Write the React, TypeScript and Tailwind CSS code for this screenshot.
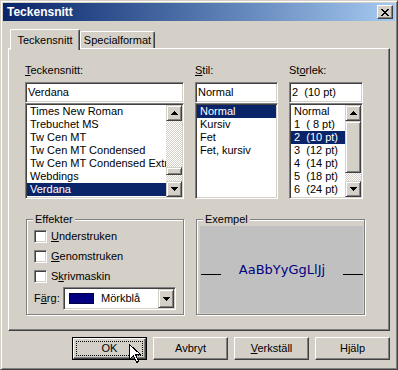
import React from "react";

const raised =
  "border border-t-white border-l-white border-r-[#404040] border-b-[#404040] shadow-[inset_-1px_-1px_0_#808080]";
const sunken =
  "border border-t-[#808080] border-l-[#808080] border-r-white border-b-white shadow-[inset_1px_1px_0_#404040,inset_-1px_-1px_0_#d4d0c8]";
const sbButton =
  "border border-t-[#d4d0c8] border-l-[#d4d0c8] border-r-[#404040] border-b-[#404040] shadow-[inset_1px_1px_0_#fff,inset_-1px_-1px_0_#808080] bg-[#d4d0c8]";
const checker =
  "bg-[repeating-conic-gradient(#ffffff_0_25%,#d4d0c8_0_50%)] bg-[length:2px_2px]";

const fonts = [
  "Times New Roman",
  "Trebuchet MS",
  "Tw Cen MT",
  "Tw Cen MT Condensed",
  "Tw Cen MT Condensed Extra Bold",
  "Webdings",
  "Verdana",
];
const styles = ["Normal", "Kursiv", "Fet", "Fet, kursiv"];
const sizes = ["Normal", "1  ( 8 pt)", "2  (10 pt)", "3  (12 pt)", "4  (14 pt)", "5  (18 pt)", "6  (24 pt)"];

const Arrow = ({ down }: { down?: boolean }) => (
  <svg width="7" height="4" viewBox="0 0 7 4" shapeRendering="crispEdges" className={down ? "rotate-180" : ""}>
    <rect x="3" y="0" width="1" height="1" />
    <rect x="2" y="1" width="3" height="1" />
    <rect x="1" y="2" width="5" height="1" />
    <rect x="0" y="3" width="7" height="1" />
  </svg>
);

const CloseGlyph = () => {
  const px = [
    [0, 0], [1, 0], [6, 0], [7, 0],
    [1, 1], [2, 1], [5, 1], [6, 1],
    [2, 2], [3, 2], [4, 2], [5, 2],
    [3, 3], [4, 3],
    [2, 4], [3, 4], [4, 4], [5, 4],
    [1, 5], [2, 5], [5, 5], [6, 5],
    [0, 6], [1, 6], [6, 6], [7, 6],
  ];
  return (
    <svg width="8" height="7" viewBox="0 0 8 7" shapeRendering="crispEdges">
      {px.map(([x, y], i) => (
        <rect key={i} x={x} y={y} width="1" height="1" />
      ))}
    </svg>
  );
};

function ScrollBar({ thumbTop, thumbH }: { thumbTop: number; thumbH: number }) {
  return (
    <div className="flex w-[16px] flex-col">
      <div className={`${sbButton} flex h-[16px] items-center justify-center`}>
        <Arrow />
      </div>
      <div className={`${checker} flex-1`}>
        <div className={sbButton} style={{ marginTop: thumbTop, height: thumbH }} />
      </div>
      <div className={`${sbButton} flex h-[16px] items-center justify-center`}>
        <Arrow down />
      </div>
    </div>
  );
}

function ListBox({
  items,
  selected,
  scroll,
}: {
  items: string[];
  selected: number;
  scroll?: { thumbTop: number; thumbH: number };
}) {
  return (
    <div className={`${sunken} flex h-[96px] bg-white p-px`}>
      <div className="min-w-0 flex-1 overflow-hidden">
        {items.map((t, i) => (
          <div
            key={i}
            className={`h-[13px] whitespace-pre pl-[3px] leading-[13px] ${
              i === selected ? "bg-[#0a246a] text-white" : ""
            }`}
          >
            {t}
          </div>
        ))}
      </div>
      {scroll && <ScrollBar {...scroll} />}
    </div>
  );
}

function Column({
  label,
  value,
  width,
  children,
}: {
  label: React.ReactNode;
  value: string;
  width: string;
  children: React.ReactNode;
}) {
  return (
    <div className={`flex flex-col ${width}`}>
      <div className="h-[13px]">{label}</div>
      <div className={`${sunken} mt-[5px] flex h-[21px] items-center bg-white p-px pl-[2px] whitespace-pre`}>
        {value}
      </div>
      {children}
    </div>
  );
}

function Group({
  label,
  className,
  children,
}: {
  label: string;
  className: string;
  children: React.ReactNode;
}) {
  return (
    <div className={`relative h-[96px] border border-[#808080] shadow-[inset_1px_1px_0_#fff,1px_1px_0_#fff] ${className}`}>
      <span className="absolute -top-[7px] left-[6px] bg-[#d4d0c8] px-[2px] leading-[13px]">{label}</span>
      {children}
    </div>
  );
}

function Check({ children }: { children: React.ReactNode }) {
  return (
    <div className="flex h-[13px] items-center">
      <div className={`${sunken} h-[13px] w-[13px] bg-white`} />
      <span className="ml-[4px]">{children}</span>
    </div>
  );
}

const Cursor = () => (
  <svg width="12" height="19" viewBox="0 0 12 19" className="absolute left-[56px] top-[6px]" shapeRendering="crispEdges">
    <path d="M0.5 0.5 L0.5 15.5 L4.5 11.5 L7.5 18.5 L9.5 17.5 L6.5 10.5 L11.5 10.5 Z" fill="#fff" stroke="#000" />
  </svg>
);

export default function App() {
  return (
    <div className="flex h-[370px] w-[398px] flex-col overflow-hidden border border-t-[#d4d0c8] border-l-[#d4d0c8] border-r-[#404040] border-b-[#404040] bg-[#d4d0c8] p-[2px] font-['Liberation_Sans',Arial,sans-serif] text-[11px] leading-[13px] text-black shadow-[inset_1px_1px_0_#fff,inset_-1px_-1px_0_#808080]">
      {/* title bar */}
      <div className="flex h-[18px] shrink-0 items-center justify-between bg-linear-to-r from-[#0a246a] to-[#a6caf0] pl-[4px] pr-[2px]">
        <span className="text-[12px] font-bold text-white">Teckensnitt</span>
        <div className={`${raised} flex h-[14px] w-[16px] items-center justify-center bg-[#d4d0c8]`}>
          <CloseGlyph />
        </div>
      </div>

      <div className="flex flex-col pl-[5px]">
        {/* tabs */}
        <div className="mt-[8px] flex h-[19px] pl-[2px]">
          <div className="relative z-10 flex h-[21px] w-[70px] items-center justify-center self-start rounded-t-[2px] border-t border-l border-r border-t-white border-l-white border-r-[#404040] bg-[#d4d0c8] shadow-[inset_-1px_0_0_#808080]">
            Teckensnitt
          </div>
          <div className="flex h-[17px] w-[75px] items-center justify-center self-end rounded-t-[2px] border-t border-l border-r border-t-white border-l-white border-r-[#404040] pt-px shadow-[inset_-1px_0_0_#808080]">
            Specialformat
          </div>
        </div>

        {/* panel */}
        <div className={`${raised} h-[283px] w-[382px] bg-[#d4d0c8] pl-[16px] pt-[15px]`}>
          <div className="flex">
            <Column label={<><u>T</u>eckensnitt:</>} value="Verdana" width="w-[159px]">
              <ListBox items={fonts} selected={6} scroll={{ thumbTop: 46, thumbH: 8 }} />
            </Column>
            <Column label={<><u>S</u>til:</>} value="Normal" width="ml-[11px] w-[83px]">
              <ListBox items={styles} selected={0} />
            </Column>
            <Column label={<>St<u>o</u>rlek:</>} value="2  (10 pt)" width="ml-[11px] w-[74px]">
              <ListBox items={sizes} selected={2} scroll={{ thumbTop: 0, thumbH: 52 }} />
            </Column>
          </div>

          <div className="ml-px mt-[20px] flex">
            <Group label="Effekter" className="w-[158px] pl-[7px] pt-[10px]">
              <div className="flex flex-col gap-[7px]">
                <Check>
                  <u>U</u>nderstruken
                </Check>
                <Check>
                  <u>G</u>enomstruken
                </Check>
                <Check>
                  S<u>k</u>rivmaskin
                </Check>
              </div>
              <div className="mt-[4px] flex items-center">
                <span className="w-[29px]">
                  F<u>ä</u>rg:
                </span>
                <div className={`${sunken} flex h-[23px] w-[113px] items-stretch bg-white p-px`}>
                  <div className="ml-[4px] h-[11px] w-[25px] self-center border border-[#000040] bg-[#000080]" />
                  <span className="ml-[7px] self-center">Mörkblå</span>
                  <div className={`${sbButton} ml-auto flex w-[16px] items-center justify-center`}>
                    <Arrow down />
                  </div>
                </div>
              </div>
            </Group>

            <Group label="Exempel" className="ml-[12px] w-[169px] pb-px pl-[3px] pr-px pt-[6px]">
              <div className="flex h-full items-center bg-[#c0c0c0]">
                <div className="ml-px mt-[10px] h-px w-[20px] bg-black" />
                <div className="flex-1 text-center font-['DejaVu_Sans',sans-serif] text-[13px] leading-[16px] text-[#000080]">
                  AaBbYyGgLlJj
                </div>
                <div className="mt-[10px] h-px w-[20px] bg-black" />
              </div>
            </Group>
          </div>
        </div>

        {/* buttons */}
        <div className="mt-[6px] flex w-[382px] justify-end gap-[6px]">
          <div className="relative h-[23px] w-[75px] border border-black">
            <div className={`${raised} h-full bg-[#d4d0c8] p-[2px]`}>
              <div className="flex h-full items-center justify-center border border-dotted border-black">OK</div>
            </div>
            <Cursor />
          </div>
          <div className={`${raised} flex h-[23px] w-[75px] items-center justify-center bg-[#d4d0c8]`}>Avbryt</div>
          <div className={`${raised} flex h-[23px] w-[75px] items-center justify-center bg-[#d4d0c8]`}>
            <span>
              <u>V</u>erkställ
            </span>
          </div>
          <div className={`${raised} flex h-[23px] w-[75px] items-center justify-center bg-[#d4d0c8]`}>Hjälp</div>
        </div>
      </div>
    </div>
  );
}
